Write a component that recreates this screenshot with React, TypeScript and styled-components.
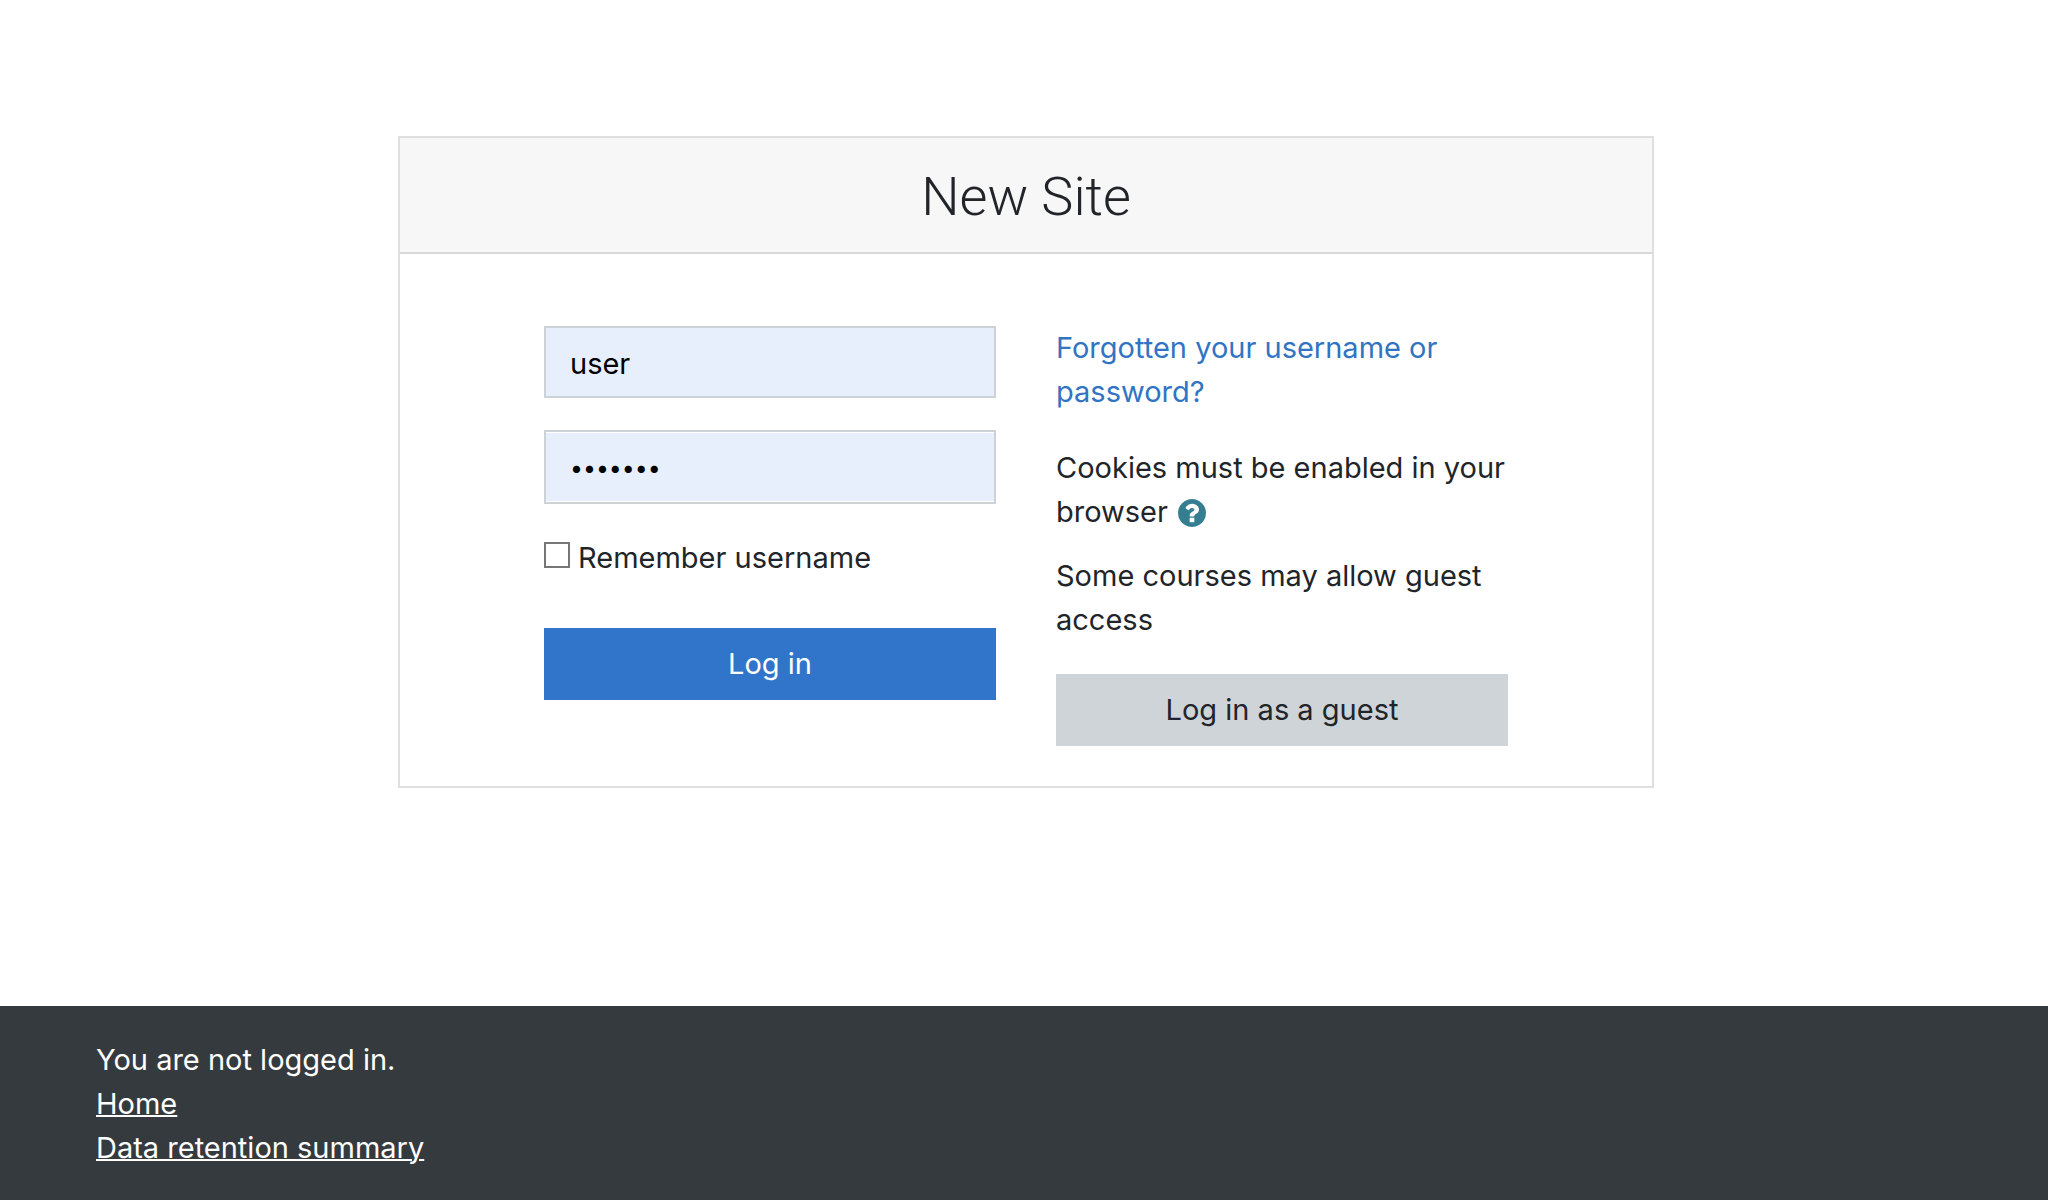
import React, { useState } from "react";
import styled, { createGlobalStyle } from "styled-components";

const fontStack = `Inter, "Liberation Sans", sans-serif`;
const headingStack = `Roboto, Inter, "Liberation Sans", sans-serif`;

const GlobalStyle = createGlobalStyle`
  *, *::before, *::after { box-sizing: border-box; }
  body {
    margin: 0;
    background: #fff;
    color: #212529;
    font-family: ${fontStack};
    font-size: 29px;
    line-height: 44px;
  }
`;

const Page = styled.div`
  display: flex;
  flex-direction: column;
  min-height: 100vh;
`;

const Main = styled.main`
  display: flex;
  flex: 1;
  justify-content: center;
  align-items: flex-start;
  padding: 136px 0 136px 4px;
`;

const Card = styled.section`
  width: 100%;
  max-width: 1256px;
  border: 2px solid #dfdfdf;
  background: #fff;
`;

const CardHeader = styled.header`
  padding: 26px 40px 22px;
  border-bottom: 2px solid #d8d8d8;
  background: #f7f7f7;
  text-align: center;
`;

const Title = styled.h1`
  margin: 0;
  font-family: ${headingStack};
  font-size: 54px;
  font-weight: 300;
  line-height: 66px;
`;

const CardBody = styled.div`
  display: grid;
  grid-template-columns: repeat(auto-fit, minmax(320px, 1fr));
  gap: 60px;
  padding: 72px 144px 40px;
`;

const LoginForm = styled.form`
  display: flex;
  flex-direction: column;
`;

const Column = styled.div`
  display: flex;
  flex-direction: column;
`;

const TextField = styled.input`
  width: 100%;
  height: 72px;
  margin: 0 0 32px;
  padding: 14px 24px 12px;
  border: 2px solid #cdd2d7;
  border-radius: 0;
  background: #e8effc;
  color: #000;
  font: inherit;
  outline-offset: 2px;
`;

const PasswordField = styled(TextField)`
  height: 74px;
  box-shadow: inset 0 1px #fff, inset 0 -1px #fff;
  font-size: 23px;
`;

const Remember = styled.label`
  display: flex;
  align-items: center;
  gap: 8px;
  margin-bottom: 48px;
`;

const Checkbox = styled.input`
  appearance: none;
  width: 26px;
  height: 26px;
  margin: 0 0 6px;
  border: 2px solid #767676;
  background: #fff;

  &:checked {
    background: #3075ca;
  }
`;

const Button = styled.button<{ $primary?: boolean }>`
  width: 100%;
  height: 72px;
  padding: 12px 24px;
  border: 0;
  background: ${(p) => (p.$primary ? "#3075ca" : "#cfd4d8")};
  color: ${(p) => (p.$primary ? "#fff" : "#212529")};
  font: inherit;
  cursor: pointer;
`;

const Paragraph = styled.p<{ $gap: number }>`
  margin: 0 0 ${(p) => p.$gap}px;
`;

const Link = styled.a`
  color: #3174c3;
  text-decoration: none;
`;

const HelpButton = styled.button`
  display: inline-flex;
  margin: 0 0 0 2px;
  padding: 0;
  border: 0;
  background: none;
  color: #357d90;
  vertical-align: -5px;
  cursor: pointer;
`;

const Footer = styled.footer`
  padding: 32px 96px 30px;
  background: #353a3e;
  color: #fff;
`;

const FooterLink = styled.a`
  color: #fff;
  text-decoration: underline;
  text-decoration-thickness: 2px;
`;

function HelpIcon() {
  return (
    <svg width="28" height="28" viewBox="128 128 1536 1536" fill="currentColor" aria-hidden="true">
      <path d="M1024 1376v-192q0-14-9-23t-23-9h-192q-14 0-23 9t-9 23v192q0 14 9 23t23 9h192q14 0 23-9t9-23zm256-672q0-88-55.5-163t-138.5-116-170-41q-243 0-371 213-15 24 8 42l132 100q7 6 19 6 16 0 25-12 53-68 86-92 34-24 86-24 48 0 85.5 26t37.5 59q0 38-20 61t-68 45q-63 28-115.5 86.500t-52.5 125.500v36q0 14 9 23t23 9h192q14 0 23-9t9-23q0-19 21.500-49.500t54.500-49.500q32-18 49-28.500t46-35 44.500-48 28-60.500 12.500-81zm384 192q0 209-103 385.500t-279.500 279.500-385.500 103-385.500-103-279.500-279.500-103-385.500 103-385.500 279.500-279.500 385.500-103 385.500 103 279.500 279.500 103 385.500z" />
    </svg>
  );
}

export default function App() {
  const [username, setUsername] = useState("user");
  const [password, setPassword] = useState("student");
  const [remember, setRemember] = useState(false);

  return (
    <Page>
      <GlobalStyle />
      <Main>
        <Card>
          <CardHeader>
            <Title>New Site</Title>
          </CardHeader>
          <CardBody>
            <LoginForm onSubmit={(e) => e.preventDefault()}>
              <TextField
                aria-label="Username"
                type="text"
                value={username}
                onChange={(e) => setUsername(e.target.value)}
              />
              <PasswordField
                aria-label="Password"
                type="password"
                value={password}
                onChange={(e) => setPassword(e.target.value)}
              />
              <Remember htmlFor="remember">
                <Checkbox
                  id="remember"
                  type="checkbox"
                  checked={remember}
                  onChange={(e) => setRemember(e.target.checked)}
                />
                Remember username
              </Remember>
              <Button type="submit" $primary>
                Log in
              </Button>
            </LoginForm>
            <Column>
              <Paragraph $gap={32}>
                <Link href="#forgot">Forgotten your username or password?</Link>
              </Paragraph>
              <Paragraph $gap={20}>
                Cookies must be enabled in your browser{" "}
                <HelpButton type="button" aria-label="Help with cookies">
                  <HelpIcon />
                </HelpButton>
              </Paragraph>
              <Paragraph $gap={32}>Some courses may allow guest access</Paragraph>
              <Button type="button">Log in as a guest</Button>
            </Column>
          </CardBody>
        </Card>
      </Main>
      <Footer>
        <div>You are not logged in.</div>
        <div>
          <FooterLink href="#home">Home</FooterLink>
        </div>
        <div>
          <FooterLink href="#retention">Data retention summary</FooterLink>
        </div>
      </Footer>
    </Page>
  );
}
